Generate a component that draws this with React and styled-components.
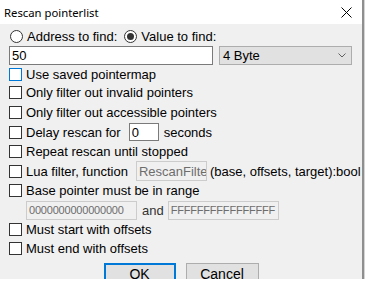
import styled, { createGlobalStyle } from "styled-components";

const Global = createGlobalStyle`
  body {
    margin: 0;
    background: #ffffff;
    font-family: "Liberation Sans", Arial, sans-serif;
    font-size: 13px;
    color: #000;
  }
`;

const Window = styled.div`
  width: 362px;
  border-right: 2px solid #8f8f8f;
  box-shadow: 1px 0 0 #d4d4d4;
`;

const TitleBar = styled.div`
  height: 24px;
  background: #fff;
  display: flex;
  align-items: center;
  justify-content: space-between;
  padding: 0 10px 0 4px;
  box-sizing: border-box;
  font-family: "Noto Sans", sans-serif;
  font-size: 11.3px;
`;

const Body = styled.div`
  height: 255px;
  overflow: hidden;
  background: #f0f0f0;
  padding: 3px 0 0 9px;
  box-sizing: border-box;
  display: flex;
  flex-direction: column;
`;

const Row = styled.div`
  display: flex;
  align-items: center;
  flex: none;
  height: ${(p) => p.h || 19}px;
  padding-left: ${(p) => p.indent || 0}px;
  white-space: nowrap;
`;

const Radio = styled.span`
  width: 13px;
  height: 13px;
  box-sizing: border-box;
  border: 1px solid #333;
  border-radius: 50%;
  background: #fff;
  margin: 0 4px 0 ${(p) => p.ml || 0}px;
  display: flex;
  align-items: center;
  justify-content: center;
  &::after {
    content: "";
    width: 7px;
    height: 7px;
    border-radius: 50%;
    background: ${(p) => (p.checked ? "#333" : "transparent")};
  }
`;

const Check = styled.span`
  width: 13px;
  height: 13px;
  box-sizing: border-box;
  border: 1px solid ${(p) => (p.focus ? "#0078d7" : "#333")};
  background: #fff;
  margin-right: 4px;
  flex: none;
`;

const TextBox = styled.div`
  width: ${(p) => p.w}px;
  height: ${(p) => p.h || 19}px;
  box-sizing: border-box;
  border: 1px solid ${(p) => (p.disabled ? "#cccccc" : "#7a7a7a")};
  background: ${(p) => (p.disabled ? "#f0f0f0" : "#fff")};
  color: ${(p) => (p.disabled ? "#6d6d6d" : "#000")};
  font-size: ${(p) => p.fs || 13}px;
  letter-spacing: ${(p) => (p.fs ? "-0.2px" : "normal")};
  padding-left: 2px;
  margin: 0 ${(p) => p.mr || 0}px 0 ${(p) => p.ml || 0}px;
  display: flex;
  align-items: center;
  overflow: hidden;
  white-space: nowrap;
  flex: none;
`;

const Select = styled.div`
  width: 133px;
  height: 19px;
  box-sizing: border-box;
  margin-left: 6px;
  border: 1px solid #adadad;
  background: #e1e1e1;
  display: flex;
  align-items: center;
  justify-content: space-between;
  padding: 0 5px 0 3px;
`;

const Joiner = styled.span`
  margin: 0 4px 0 5px;
  color: #333;
`;

const Buttons = styled.div`
  display: flex;
  justify-content: center;
  gap: 10px;
  margin: 5px 0 0 -9px;
  flex: none;
`;

const Button = styled.div`
  width: ${(p) => p.w}px;
  height: 23px;
  box-sizing: border-box;
  border: ${(p) => (p.primary ? "2px solid #0078d7" : "1px solid #adadad")};
  background: #e1e1e1;
  display: flex;
  align-items: center;
  justify-content: center;
  padding-bottom: 2px;
  font-size: 14px;
`;

const CheckRow = ({ label, focus, h, children }) => (
  <Row h={h}>
    <Check focus={focus} />
    {label}
    {children}
  </Row>
);

export default function App() {
  return (
    <>
      <Global />
      <Window>
        <TitleBar>
          <span>Rescan pointerlist</span>
          <svg width="11" height="11" viewBox="0 0 11 11">
            <path d="M0.5 0.5L10.5 10.5M10.5 0.5L0.5 10.5" stroke="#000" strokeWidth="1" />
          </svg>
        </TitleBar>
        <Body>
          <Row h={18} indent={1}>
            <Radio />
            Address to find:
            <Radio checked ml={7} />
            Value to find:
          </Row>
          <Row h={20}>
            <TextBox w={204}>50</TextBox>
            <Select>
              <span>4 Byte</span>
              <svg width="8" height="5" viewBox="0 0 8 5">
                <path d="M0.5 0.5L4 4L7.5 0.5" fill="none" stroke="#606060" strokeWidth="1" />
              </svg>
            </Select>
          </Row>
          <CheckRow label="Use saved pointermap" focus h={18} />
          <CheckRow label="Only filter out invalid pointers" h={19} />
          <CheckRow label="Only filter out accessible pointers" h={20} />
          <CheckRow label="Delay rescan for" h={20}>
            <TextBox w={30} h={18} ml={8} mr={5}>0</TextBox>
            seconds
          </CheckRow>
          <CheckRow label="Repeat rescan until stopped" h={19} />
          <CheckRow label="Lua filter, function" h={20}>
            <TextBox w={71} h={20} ml={8} mr={3} disabled>RescanFilter</TextBox>
            (base, offsets, target):bool
          </CheckRow>
          <CheckRow label="Base pointer must be in range" h={19} />
          <Row h={20} indent={17}>
            <TextBox w={111} fs={11} disabled>0000000000000000</TextBox>
            <Joiner>and</Joiner>
            <TextBox w={111} fs={11} disabled>FFFFFFFFFFFFFFFF</TextBox>
          </Row>
          <CheckRow label="Must start with offsets" h={19} />
          <CheckRow label="Must end with offsets" h={19} />
          <Buttons>
            <Button primary w={72}>OK</Button>
            <Button w={73}>Cancel</Button>
          </Buttons>
        </Body>
      </Window>
    </>
  );
}
